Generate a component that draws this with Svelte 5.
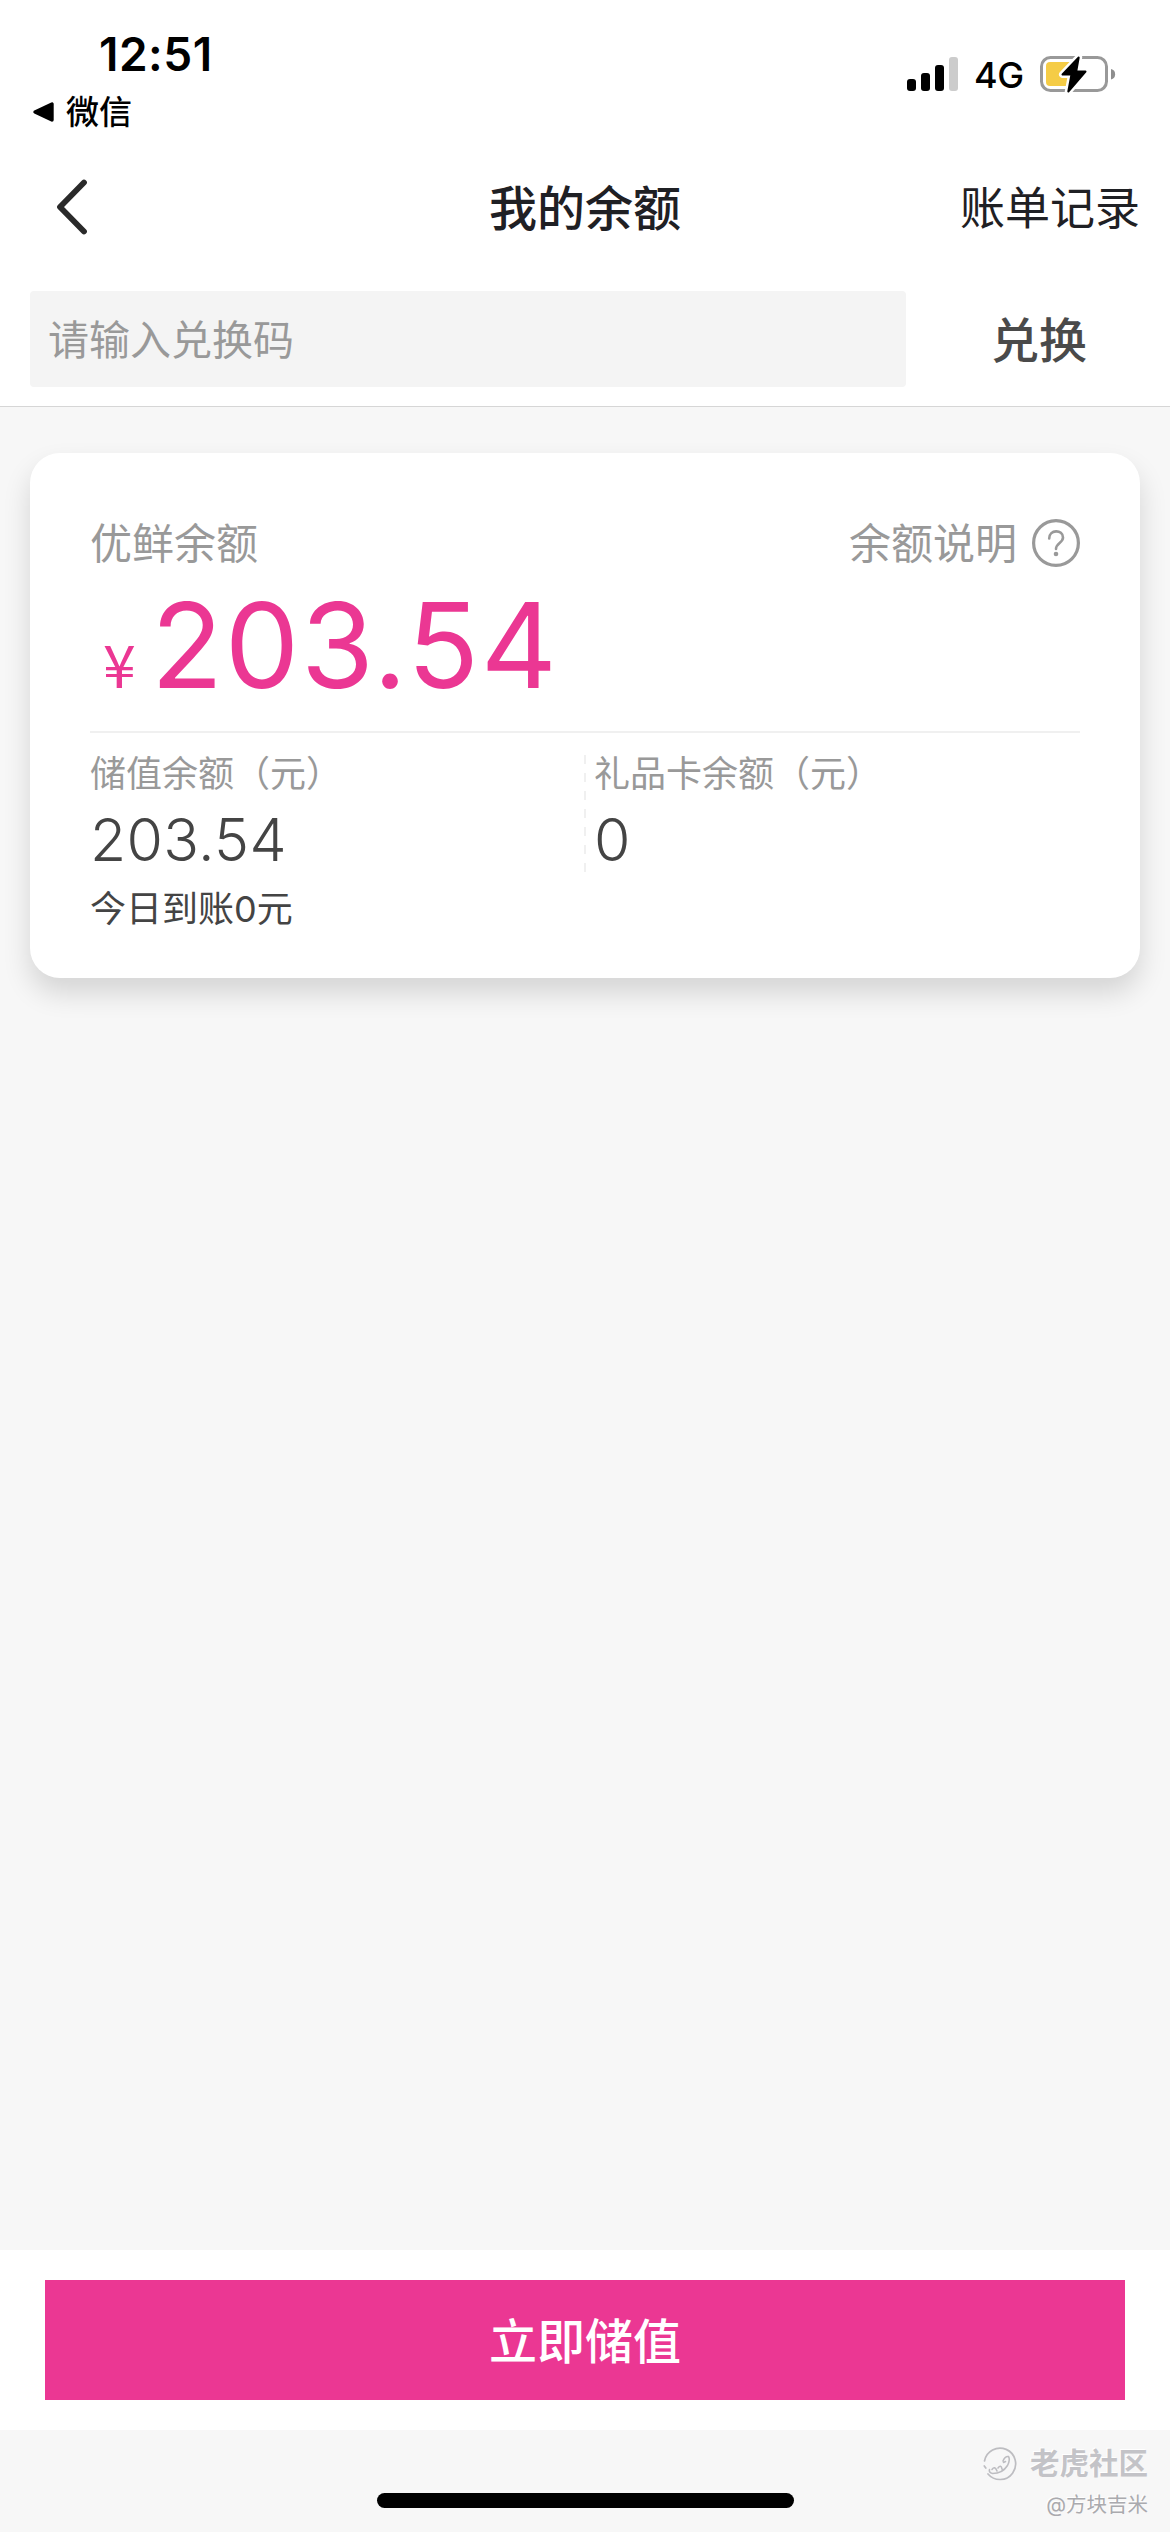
<script>
    let code = "";

    const balance = "203.54";
    const accounts = [
        { label: "储值余额（元）", amount: "203.54", note: "今日到账0元" },
        { label: "礼品卡余额（元）", amount: "0", note: "" },
    ];

    const signal = [12, 18, 26, 34];
</script>

<div class="page">
    <div class="status-bar">
        <div class="status-left">
            <div class="time">12:51</div>
            <div class="back-app">
                <svg width="22" height="22" viewBox="0 0 22 22">
                    <path
                        d="M3 11 L20 3 V19 Z"
                        fill="#000"
                        stroke="#000"
                        stroke-width="3.4"
                        stroke-linejoin="round"
                    />
                </svg>
                <span>微信</span>
            </div>
        </div>
        <div class="status-right">
            <svg width="51" height="34" viewBox="0 0 51 34">
                {#each signal as height, i}
                    <rect
                        x={i * 14}
                        y={34 - height}
                        width="9"
                        {height}
                        rx="3"
                        fill={i < 3 ? "#000" : "#ccc"}
                    />
                {/each}
            </svg>
            <span class="network">4G</span>
            <svg class="battery" width="76" height="40" viewBox="0 0 76 40">
                <rect
                    x="1.5"
                    y="3.5"
                    width="65"
                    height="33"
                    rx="9"
                    fill="none"
                    stroke="#999"
                    stroke-width="3"
                />
                <path d="M71 15 a5.4 5.4 0 0 1 0 10.5 Z" fill="#8e8e8e" />
                <path
                    d="M10 8 H32 V32 H10 a4 4 0 0 1 -4 -4 V12 a4 4 0 0 1 4 -4 Z"
                    fill="#f5cc46"
                />
                <path
                    class="bolt"
                    d="M38.7 3.5 L22.5 20.5 H31.5 L28.3 37.5 L45.5 17.5 H36.2 Z"
                    stroke="#fff"
                    stroke-width="7"
                />
                <path
                    class="bolt"
                    d="M38.7 3.5 L22.5 20.5 H31.5 L28.3 37.5 L45.5 17.5 H36.2 Z"
                    stroke="#000"
                    stroke-width="2"
                />
            </svg>
        </div>
    </div>

    <div class="nav">
        <svg class="nav-back" width="36" height="60" viewBox="0 0 36 60">
            <path
                d="M32 5.5 L8 30 L32 54.5"
                fill="none"
                stroke="#2a2a2a"
                stroke-width="5.8"
                stroke-linecap="round"
                stroke-linejoin="round"
            />
        </svg>
        <div class="title">我的余额</div>
        <div class="records">账单记录</div>
    </div>

    <div class="redeem">
        <input bind:value={code} placeholder="请输入兑换码" />
        <button class="redeem-btn">兑换</button>
    </div>

    <div class="content">
        <div class="card">
            <div class="card-head">
                <span>优鲜余额</span>
                <span class="explain">
                    余额说明
                    <svg width="48" height="48" viewBox="0 0 48 48">
                        <g fill="none" stroke="#999">
                            <circle cx="24" cy="24" r="22.4" stroke-width="3.2" />
                            <path
                                d="M17.2 19.5 C17.2 10 31 10.2 31 18.6 C31 24 24 24.2 24 30"
                                stroke-width="2.6"
                                stroke-linecap="round"
                            />
                        </g>
                        <circle cx="24" cy="35" r="2.3" fill="#999" />
                    </svg>
                </span>
            </div>
            <div class="balance">
                <span class="yen">¥</span>
                <span class="number">{balance}</span>
            </div>
            <div class="accounts">
                {#each accounts as account, i}
                    <div class="account">
                        {#if i > 0}
                            <div class="dashes"></div>
                        {/if}
                        <div>
                            <div class="label">{account.label}</div>
                            <div class="amount">{account.amount}</div>
                            {#if account.note}
                                <div class="note">{account.note}</div>
                            {/if}
                        </div>
                    </div>
                {/each}
            </div>
        </div>
    </div>

    <div class="footer">
        <button class="recharge">立即储值</button>
    </div>

    <div class="bottom">
        <div class="home-indicator"></div>
        <div class="watermark">
            <div class="brand">
                <svg width="34" height="34" viewBox="0 0 34 34">
                    <g fill="none" stroke="#bdbdc1" stroke-linecap="round">
                        <path
                            d="M1.5 14 A15.7 15.7 0 1 1 5 27 M1.3 19 l1.5 2"
                            stroke-width="1.7"
                        />
                        <path
                            d="M20 14 q2 -5 5.5 -4.5 q2 3 -1 9 q-5 8 -15 8 q-4 -1 -3 -4 M9 22.5 q3 -4 5 1.5 M15 21 q3 -4 4 1 M20.5 15.5 l2 -1"
                            stroke-width="1.6"
                        />
                    </g>
                </svg>
                <span>老虎社区</span>
            </div>
            <div class="author">@方块吉米</div>
        </div>
    </div>
</div>

<style>
    :global(body) {
        margin: 0;
        background: #f7f7f7;
    }
    .page {
        display: flex;
        flex-direction: column;
        width: 1170px;
        height: 2532px;
        overflow: hidden;
        background: #f7f7f7;
        font-family: Inter, "Noto Sans CJK SC", sans-serif;
        color: #444;
    }
    svg {
        display: block;
        flex: none;
    }
    input,
    button {
        border: none;
        padding: 0;
        font-family: inherit;
    }
    .status-bar {
        display: flex;
        justify-content: space-between;
        height: 141px;
        box-sizing: border-box;
        padding: 29px 54px 0 32px;
        background: #fff;
        color: #000;
    }
    .time {
        padding-left: 67px;
        font-size: 46px;
        font-weight: 600;
        line-height: 50px;
        letter-spacing: 0.5px;
    }
    .back-app {
        display: flex;
        align-items: center;
        gap: 12px;
        margin-top: 10px;
        font-size: 33px;
        font-weight: 500;
        line-height: 46px;
    }
    .status-right {
        display: flex;
        align-items: center;
        height: 34px;
        margin-top: 28px;
    }
    .network {
        width: 66px;
        padding-left: 16px;
        padding-top: 2px;
        font-size: 36px;
        font-weight: 500;
        letter-spacing: -0.5px;
    }
    .bolt {
        stroke-linejoin: round;
    }
    .nav {
        display: grid;
        grid-template-columns: 1fr auto 1fr;
        align-items: center;
        height: 132px;
        padding: 0 30px 0 52px;
        background: #fff;
        color: #1f2024;
    }
    .title {
        margin-right: 22px;
        padding-bottom: 5px;
        font-size: 48px;
        font-weight: 500;
    }
    .records {
        justify-self: end;
        padding-bottom: 3px;
        font-size: 45px;
    }
    .redeem {
        display: flex;
        height: 133px;
        padding: 0 30px;
        border-bottom: 1px solid #d6d6d6;
        background: #fff;
    }
    input {
        width: 876px;
        height: 96px;
        box-sizing: border-box;
        margin-top: 18px;
        padding: 1px 18px 0;
        border-radius: 4px;
        background: #f4f4f4;
        font-size: 41px;
    }
    input::placeholder {
        color: #999;
        opacity: 1;
    }
    .redeem-btn {
        flex: 1;
        padding: 0 0 5px 32px;
        background: none;
        font-size: 48px;
        font-weight: 500;
        color: #4a4a4a;
    }
    .content {
        flex: 1;
        padding: 46px 30px 0;
    }
    .card {
        height: 525px;
        box-sizing: border-box;
        padding: 61px 60px 0;
        border-radius: 30px;
        background: #fff;
        box-shadow: 0 15px 28px rgba(0, 0, 0, 0.14);
    }
    .card-head {
        display: flex;
        justify-content: space-between;
        font-size: 42px;
        line-height: 60px;
        color: #999;
    }
    .explain {
        display: flex;
        align-items: center;
        gap: 15px;
    }
    .explain svg {
        margin-top: -2px;
    }
    .balance {
        display: flex;
        align-items: baseline;
        height: 157px;
        border-bottom: 2px solid #f0f0f0;
        line-height: 142px;
        color: #eb3793;
    }
    .yen {
        width: 61px;
        padding-left: 13px;
        box-sizing: border-box;
        font-family: "Noto Sans CJK SC", sans-serif;
        font-size: 59px;
    }
    .number {
        font-size: 118px;
        letter-spacing: 1.8px;
    }
    .accounts {
        display: grid;
        grid-template-columns: 1fr 1fr;
        padding-top: 21px;
    }
    .account {
        display: flex;
    }
    .dashes {
        width: 2px;
        height: 126px;
        margin: 1px 8px 0 -1px;
        background: repeating-linear-gradient(#f0f0f0 0 9px, #fff 9px 18px);
    }
    .label {
        font-size: 36px;
        line-height: 40px;
        color: #999;
    }
    .amount {
        margin-top: 16px;
        font-size: 59px;
        font-weight: 300;
        line-height: 60px;
        letter-spacing: 0.3px;
    }
    .note {
        margin-top: 19px;
        font-size: 36px;
        line-height: 40px;
    }
    .footer {
        height: 120px;
        padding: 30px 45px;
        background: #fff;
    }
    .recharge {
        width: 100%;
        height: 120px;
        padding-bottom: 4px;
        background: #eb3793;
        color: #fff;
        font-size: 48px;
        font-weight: 500;
    }
    .bottom {
        position: relative;
        height: 102px;
    }
    .home-indicator {
        position: absolute;
        left: 377px;
        bottom: 24px;
        width: 417px;
        height: 15px;
        border-radius: 8px;
        background: #000;
    }
    .watermark {
        display: flex;
        flex-direction: column;
        align-items: flex-end;
        padding: 13px 22px 0 0;
        color: #c3c3c7;
        text-shadow: -1px -1px 0 #fff;
    }
    .brand {
        display: flex;
        align-items: center;
        gap: 13px;
        height: 42px;
        font-size: 29.5px;
        font-weight: 700;
        line-height: 38px;
    }
    .brand span {
        margin-top: -3px;
    }
    .author {
        height: 40px;
        font-size: 20.5px;
        line-height: 40px;
        color: #aaaaae;
    }
</style>
